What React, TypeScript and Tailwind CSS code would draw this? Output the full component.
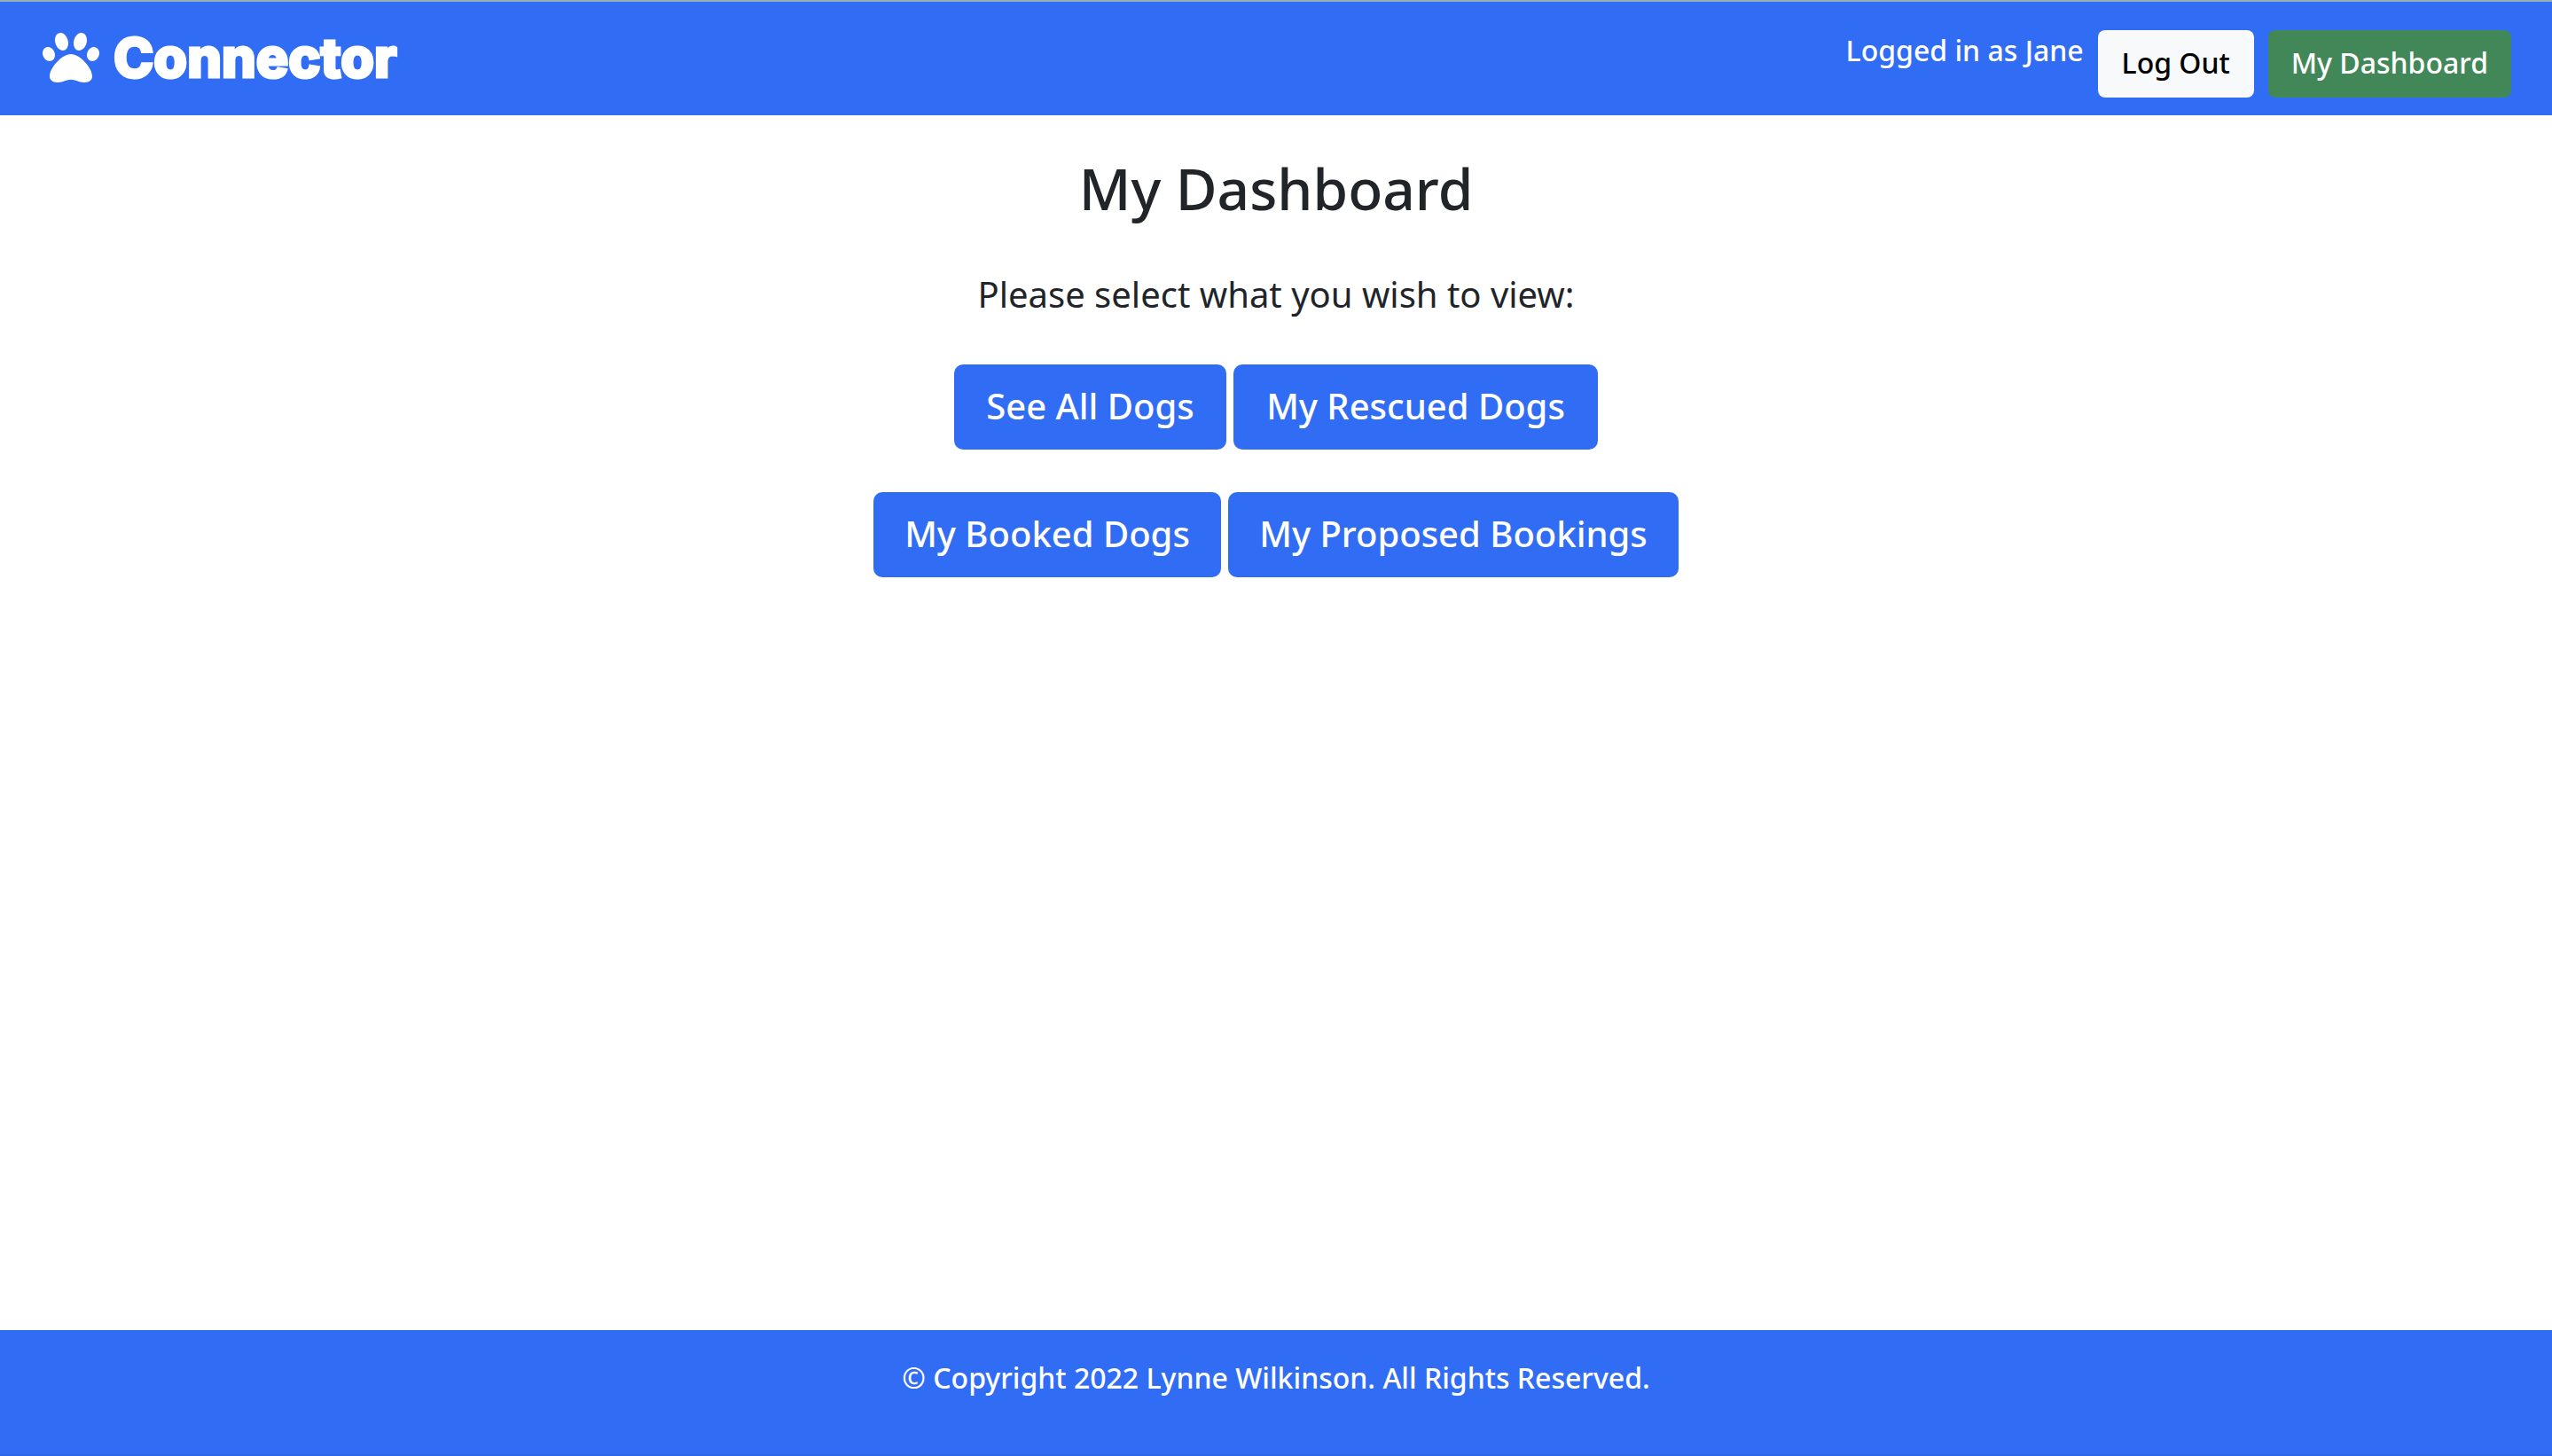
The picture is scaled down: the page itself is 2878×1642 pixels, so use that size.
import React from "react";
import { FaPaw } from "react-icons/fa";

const rows = [
  [
    { label: "See All Dogs", width: "min-w-[307px]" },
    { label: "My Rescued Dogs", width: "min-w-[411px]" },
  ],
  [
    { label: "My Booked Dogs", width: "min-w-[392px]" },
    { label: "My Proposed Bookings", width: "min-w-[508px]" },
  ],
];

const navButton =
  "flex items-center justify-center rounded-lg h-[76px] px-[26px] pb-[2px] text-[32px] leading-[48px]";

function NavBar() {
  return (
    <header className="flex items-start justify-between border-t-2 border-[#97b0b8] bg-[#316cf4] pl-12 pr-[46px] h-[130px] text-white">
      <a
        href="#home"
        className="flex items-center gap-4 pt-4 font-[Inter,sans-serif] text-[61px] font-extrabold leading-[94px] [-webkit-text-stroke:3px_white] [stroke-linejoin:round]"
      >
        <FaPaw className="size-16 [stroke-width:0]" />
        Connector
      </a>
      <nav className="flex items-start gap-4 pt-8">
        <span className="text-[32px] leading-[46px]">Logged in as Jane</span>
        <button type="button" className={`${navButton} min-w-44 bg-[#f8f9fb] text-black`}>
          Log Out
        </button>
        <a href="#dashboard" className={`${navButton} min-w-[274px] bg-[#428758] text-white`}>
          My Dashboard
        </a>
      </nav>
    </header>
  );
}

export default function App() {
  return (
    <div className="flex min-h-screen flex-col bg-white font-['Noto_Sans',sans-serif] font-medium text-[#212529]">
      <NavBar />
      <main className="flex grow flex-col items-center pt-11 text-center">
        <h1 className="text-[64px] font-medium leading-[78px]">My Dashboard</h1>
        <p className="mt-[50px] text-[40px] font-normal leading-[60px]">
          Please select what you wish to view:
        </p>
        <div className="mt-[49px] flex flex-col items-center gap-12">
          {rows.map((links) => (
            <div key={links[0].label} className="flex gap-2">
              {links.map(({ label, width }) => (
                <a
                  key={label}
                  href="#dogs"
                  className={`${width} rounded-[10px] bg-[#316cf4] px-[34px] pt-[17px] pb-[19px] text-[40px] leading-[60px] text-white`}
                >
                  {label}
                </a>
              ))}
            </div>
          ))}
        </div>
      </main>
      <footer className="h-[142px] border-b-2 border-[#2e66e8] bg-[#316cf4] pt-[30px] text-center text-[32px] leading-[48px] text-white">
        © Copyright 2022 Lynne Wilkinson. All Rights Reserved.
      </footer>
    </div>
  );
}
